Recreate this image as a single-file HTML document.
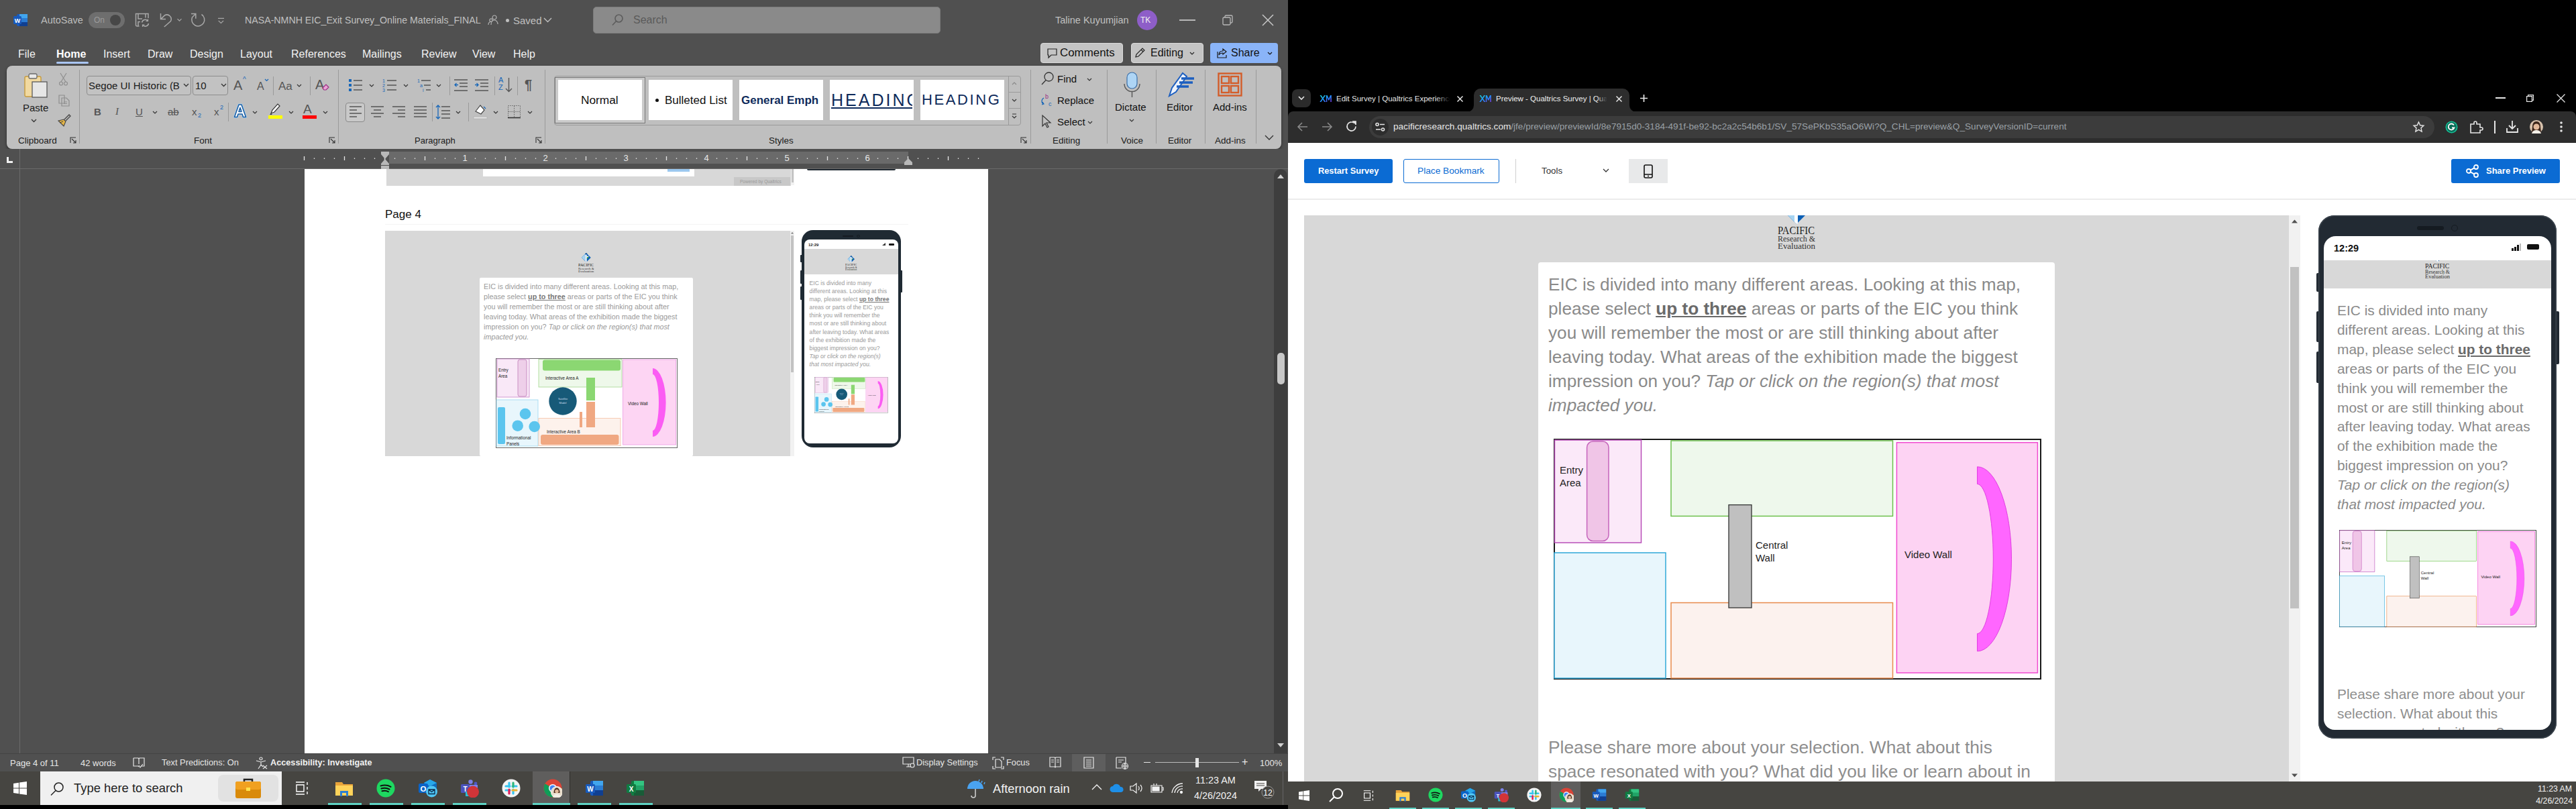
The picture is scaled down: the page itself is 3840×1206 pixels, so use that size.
<!DOCTYPE html>
<html><head><meta charset="utf-8">
<style>
*{box-sizing:border-box;margin:0;padding:0}
html,body{width:3840px;height:1206px;overflow:hidden;background:#000}
body{position:relative;font-family:"Liberation Sans",sans-serif}
.a{position:absolute}
.t{position:absolute;white-space:nowrap;line-height:1}
svg{position:absolute;overflow:visible}
.sep{position:absolute;width:1px;background:#9a9a9a}
.chev{position:absolute;width:6px;height:6px;border-right:1.5px solid #333;border-bottom:1.5px solid #333;transform:rotate(45deg)}
</style></head><body>
<!-- ================= LEFT MONITOR: WORD ================= -->
<div class="a" style="left:0;top:0;width:1920px;height:1200px;background:#505050"></div>
<!-- title bar -->
<svg style="left:20px;top:20px" width="21" height="20" viewBox="0 0 21 20"><rect x="5" y="1" width="16" height="18" rx="2" fill="#185abd"/><rect x="9" y="1" width="12" height="6" fill="#41a5ee"/><rect x="9" y="7" width="12" height="6" fill="#2b7cd3"/><rect x="9" y="13" width="12" height="6" fill="#103f91"/><rect x="0" y="4" width="12" height="12" rx="1.5" fill="#185abd"/><text x="6" y="13.5" font-size="9" font-weight="700" fill="#fff" text-anchor="middle" font-family="Liberation Sans">W</text></svg>
<div class="t" style="left:61px;top:23px;font-size:14.5px;color:#bdbdbd">AutoSave</div>
<div class="a" style="left:132px;top:18px;width:54px;height:24px;border-radius:12px;background:#6e6e6e"></div>
<div class="t" style="left:140px;top:24px;font-size:12px;color:#9c9c9c">On</div>
<div class="a" style="left:164px;top:22px;width:16px;height:16px;border-radius:8px;background:#474747"></div>
<svg style="left:0;top:0" width="350" height="50" fill="none" stroke="#a8a8a8" stroke-width="1.5">
<path d="M208 44.5M221 27V20.5H202.5V37Q202.5 39 204.5 39H207.5"/><path d="M206 20.5V28H212M217 20.5V26.5M206 39V32.5H209"/>
<path d="M211.5 33.5A5 5 0 0 1 220.5 31.5M221.5 35A5 5 0 0 1 212.5 37"/><path d="M220.5 28.5V31.5H217.5M212.5 40V37H215.5" stroke-width="1.2"/>
<path d="M239.5 20V28.6H247M239.5 28.6L246 22.5A6.6 6.6 0 0 1 254.5 31.5L244.8 40"/>
<path d="M264.5 28.2l3 3 3-3" stroke-width="1.2"/>
<path d="M285 20.5H291.8V27.7M291.8 20.5L286.5 25.8A9.5 9.5 0 1 0 300.5 21.5"/>
<path d="M325 27.4H334M325.7 30.8L329.4 34.5 333.1 30.8" stroke-width="1.2"/>
</svg>
<div class="t" style="left:365px;top:23px;font-size:14.2px;color:#c0c0c0">NASA-NMNH EIC_Exit Survey_Online Materials_FINAL</div>
<svg style="left:727px;top:22px" width="15" height="16" viewBox="0 0 15 16" fill="none" stroke="#b0b0b0" stroke-width="1.2"><circle cx="10" cy="4" r="3"/><path d="M5 15c0-4 2-7 5-7s5 3 5 6"/><circle cx="5" cy="8" r="2.2"/><path d="M1 15c0-3 1.5-4.5 4-4.5"/></svg>
<div class="a" style="left:754px;top:28px;width:5px;height:5px;border-radius:3px;background:#c0c0c0"></div>
<div class="t" style="left:765px;top:23px;font-size:15px;color:#c0c0c0">Saved</div>
<svg style="left:810px;top:26px" width="13" height="8" viewBox="0 0 13 8" fill="none" stroke="#c0c0c0" stroke-width="1.4"><path d="M1 1l5.5 5.5L12 1"/></svg>
<div class="a" style="left:884px;top:10px;width:518px;height:40px;border-radius:5px;background:#8a8a8a;border:1px solid #7a7a7a"></div>
<svg style="left:912px;top:21px" width="17" height="18" viewBox="0 0 17 18" fill="none" stroke="#5c5c5c" stroke-width="1.6"><circle cx="10.5" cy="6.5" r="5.5"/><path d="M6.5 10.5L1 16.5"/></svg>
<div class="t" style="left:944px;top:22px;font-size:16px;color:#5a5a5a">Search</div>
<div class="t" style="left:1573px;top:23px;font-size:14.5px;color:#c0c0c0">Taline Kuyumjian</div>
<div class="a" style="left:1695px;top:15px;width:30px;height:30px;border-radius:15px;background:#8e5ec8"></div>
<div class="t" style="left:1700px;top:24px;font-size:12px;color:#f0f0f0">TK</div>
<div class="a" style="left:1758px;top:29px;width:24px;height:1.5px;background:#b8b8b8"></div>
<svg style="left:1822px;top:22px" width="16" height="16" viewBox="0 0 16 16" fill="none" stroke="#b8b8b8" stroke-width="1.3"><rect x="1" y="4" width="11" height="11" rx="1.5"/><path d="M4 4V2.5A1.5 1.5 0 0 1 5.5 1H13.5A1.5 1.5 0 0 1 15 2.5V10.5A1.5 1.5 0 0 1 13.5 12H12"/></svg>
<svg style="left:1881px;top:21px" width="18" height="18" viewBox="0 0 18 18" fill="none" stroke="#c8c8c8" stroke-width="1.5"><path d="M1 1l16 16M17 1L1 17"/></svg>
<!-- tab row -->
<div class="t" style="left:27px;top:73px;font-size:16px;color:#f2f2f2">File</div>
<div class="t" style="left:84px;top:73px;font-size:16px;color:#ffffff;font-weight:700">Home</div>
<div class="a" style="left:84px;top:92px;width:48px;height:3px;border-radius:2px;background:#aac6f5"></div>
<div class="t" style="left:154px;top:73px;font-size:16px;color:#f2f2f2">Insert</div>
<div class="t" style="left:220px;top:73px;font-size:16px;color:#f2f2f2">Draw</div>
<div class="t" style="left:283px;top:73px;font-size:16px;color:#f2f2f2">Design</div>
<div class="t" style="left:358px;top:73px;font-size:16px;color:#f2f2f2">Layout</div>
<div class="t" style="left:434px;top:73px;font-size:16px;color:#f2f2f2">References</div>
<div class="t" style="left:540px;top:73px;font-size:16px;color:#f2f2f2">Mailings</div>
<div class="t" style="left:628px;top:73px;font-size:16px;color:#f2f2f2">Review</div>
<div class="t" style="left:704px;top:73px;font-size:16px;color:#f2f2f2">View</div>
<div class="t" style="left:765px;top:73px;font-size:16px;color:#f2f2f2">Help</div>
<!-- comments / editing / share -->
<div class="a" style="left:1551px;top:64px;width:123px;height:30px;border-radius:4px;background:#c4c4c4;border:1px solid #dadada"></div>
<svg style="left:1561px;top:72px" width="15" height="15" viewBox="0 0 15 15" fill="none" stroke="#222" stroke-width="1.2"><path d="M1 1h13v9H6l-4 4v-4H1z"/></svg>
<div class="t" style="left:1580px;top:71px;font-size:16.9px;color:#111">Comments</div>
<div class="a" style="left:1686px;top:64px;width:108px;height:30px;border-radius:4px;background:#c4c4c4;border:1px solid #dadada"></div>
<svg style="left:1691px;top:70px" width="17" height="17" viewBox="0 0 17 17" fill="none" stroke="#222" stroke-width="1.2"><path d="M2 15l1-4L12 2l3 3-9 9z M10 4l3 3"/></svg>
<div class="t" style="left:1715px;top:71px;font-size:16px;color:#111">Editing</div>
<svg style="left:1773px;top:77px" width="8" height="5" viewBox="0 0 8 5" fill="none" stroke="#222" stroke-width="1.2"><path d="M1 1l3 3 3-3"/></svg>
<div class="a" style="left:1804px;top:64px;width:101px;height:30px;border-radius:4px;background:#8ab4f8"></div>
<svg style="left:1814px;top:71px" width="17" height="16" viewBox="0 0 17 16" fill="none" stroke="#1a1a1a" stroke-width="1.2"><path d="M1 6v9h13v-4M9 2l5 4-5 4V8c-3 0-5 1-6 3 0-4 2-6 6-6z"/></svg>
<div class="t" style="left:1835px;top:71px;font-size:16px;color:#111">Share</div>
<svg style="left:1889px;top:77px" width="8" height="5" viewBox="0 0 8 5" fill="none" stroke="#111" stroke-width="1.2"><path d="M1 1l3 3 3-3"/></svg>
<!-- ribbon -->
<div class="a" style="left:10px;top:98px;width:1900px;height:124px;border-radius:8px;background:#bfbfbf;box-shadow:0 2px 4px rgba(0,0,0,.45)"></div>
<!-- clipboard -->
<svg style="left:36px;top:108px" width="36" height="38" viewBox="0 0 36 38"><rect x="1" y="6" width="24" height="30" rx="2" fill="#f1d9a0" stroke="#c79b3b" stroke-width="1.4"/><rect x="7" y="2" width="12" height="7" rx="2" fill="#e8e8e8" stroke="#6b6b6b" stroke-width="1.3"/><rect x="12" y="14" width="22" height="23" fill="#e6e6e6" stroke="#5a5a5a" stroke-width="1.3"/></svg>
<div class="t" style="left:34px;top:153px;font-size:15px;color:#1a1a1a">Paste</div>
<svg style="left:46px;top:177px" width="9" height="6" viewBox="0 0 9 6" fill="none" stroke="#333" stroke-width="1.3"><path d="M1 1l3.5 3.5L8 1"/></svg>
<svg style="left:88px;top:108px" width="13" height="20" viewBox="0 0 13 20" fill="none" stroke="#8e8e8e" stroke-width="1.2"><path d="M2 1l8 13M11 1L3 14"/><circle cx="3" cy="16.5" r="2.5"/><circle cx="10" cy="16.5" r="2.5"/></svg>
<svg style="left:87px;top:141px" width="17" height="18" viewBox="0 0 17 18" fill="none" stroke="#8e8e8e" stroke-width="1.2"><path d="M1 1h8v12H1z"/><path d="M5 5h7l4 4v8H5z"/><path d="M8 11h5M8 13.5h5"/></svg>
<svg style="left:86px;top:170px" width="20" height="19" viewBox="0 0 20 19"><path d="M1 10l8-2 3 3-3 7z" fill="#e4b547" stroke="#444" stroke-width="1.1"/><path d="M10 8l7-7 2 2-7 7" fill="none" stroke="#444" stroke-width="1.3"/><path d="M3 13l5-2" stroke="#444" stroke-width="1"/></svg>
<div class="t" style="left:27px;top:203px;font-size:13.5px;color:#1a1a1a">Clipboard</div>
<svg style="left:104px;top:204px" width="10" height="10" viewBox="0 0 10 10" fill="none" stroke="#333" stroke-width="1.1"><path d="M1 9V1h8M3 3l6 6M9 5v4H5"/></svg>
<div class="sep" style="left:118px;top:104px;height:110px"></div>
<!-- font -->
<div class="a" style="left:129px;top:113px;width:156px;height:29px;border-radius:4px;border:1px solid #8c8c8c;background:#c2c2c2"></div>
<div class="t" style="left:132px;top:120px;font-size:15px;color:#1a1a1a">Segoe UI Historic (B</div>
<svg style="left:273px;top:124px" width="9" height="6" viewBox="0 0 9 6" fill="none" stroke="#333" stroke-width="1.3"><path d="M1 1l3.5 3.5L8 1"/></svg>
<div class="a" style="left:287px;top:113px;width:53px;height:29px;border-radius:4px;border:1px solid #8c8c8c;background:#c2c2c2"></div>
<div class="t" style="left:291px;top:120px;font-size:15px;color:#1a1a1a">10</div>
<svg style="left:329px;top:124px" width="9" height="6" viewBox="0 0 9 6" fill="none" stroke="#333" stroke-width="1.3"><path d="M1 1l3.5 3.5L8 1"/></svg>
<div class="t" style="left:348px;top:117px;font-size:20px;color:#555">A</div>
<div class="t" style="left:362px;top:114px;font-size:10px;color:#1766b8">^</div>
<div class="t" style="left:383px;top:121px;font-size:16px;color:#555">A</div>
<svg style="left:394px;top:117px" width="7" height="5" viewBox="0 0 7 5" fill="none" stroke="#1766b8" stroke-width="1.2"><path d="M1 1l2.5 2.5L6 1"/></svg>
<div class="sep" style="left:407px;top:114px;height:28px"></div>
<div class="t" style="left:415px;top:120px;font-size:17px;color:#555">Aa</div>
<svg style="left:442px;top:125px" width="8" height="5" viewBox="0 0 8 5" fill="none" stroke="#333" stroke-width="1.2"><path d="M1 1l3 3 3-3"/></svg>
<div class="sep" style="left:462px;top:114px;height:28px"></div>
<div class="t" style="left:470px;top:116px;font-size:20px;color:#555">A</div>
<svg style="left:480px;top:125px" width="11" height="10" viewBox="0 0 11 10"><path d="M1 6l5-5 4 4-4 4H3z" fill="#e9a3d6" stroke="#9b2d83" stroke-width="1.2"/></svg>
<div class="t" style="left:140px;top:159px;font-size:15px;color:#555;font-weight:700">B</div>
<div class="t" style="left:172px;top:159px;font-size:15px;color:#555;font-style:italic;font-family:'Liberation Serif'">I</div>
<div class="t" style="left:202px;top:159px;font-size:15px;color:#555;text-decoration:underline">U</div>
<svg style="left:227px;top:165px" width="8" height="5" viewBox="0 0 8 5" fill="none" stroke="#333" stroke-width="1.2"><path d="M1 1l3 3 3-3"/></svg>
<div class="t" style="left:250px;top:159px;font-size:15px;color:#555;text-decoration:line-through">ab</div>
<div class="t" style="left:286px;top:159px;font-size:15px;color:#555">x</div>
<div class="t" style="left:295px;top:168px;font-size:9px;color:#1766b8">2</div>
<div class="t" style="left:319px;top:159px;font-size:15px;color:#555">x</div>
<div class="t" style="left:328px;top:156px;font-size:9px;color:#1766b8">2</div>
<div class="sep" style="left:340px;top:153px;height:28px"></div>
<svg style="left:348px;top:154px" width="20" height="22" viewBox="0 0 20 22"><path d="M1.5 20.5L8 2h4l6.5 18.5h-4l-1.5-4.5H7l-1.5 4.5zM8 12.5h4L10 6.5z" fill="#eaf3fb" stroke="#a9d1f2" stroke-width="3" stroke-linejoin="round"/><path d="M1.5 20.5L8 2h4l6.5 18.5h-4l-1.5-4.5H7l-1.5 4.5zM8 12.5h4L10 6.5z" fill="#fff" stroke="#1d5fa3" stroke-width="1.6" stroke-linejoin="round"/></svg>
<svg style="left:376px;top:165px" width="8" height="5" viewBox="0 0 8 5" fill="none" stroke="#333" stroke-width="1.2"><path d="M1 1l3 3 3-3"/></svg>
<svg style="left:400px;top:153px" width="21" height="25" viewBox="0 0 21 25"><path d="M4 16l2-5 8-9 3 3-8 9z" fill="#fff" stroke="#333" stroke-width="1.2"/><path d="M4 16l-2 2h4z" fill="#333"/><rect x="0" y="19" width="21" height="5" fill="#ffff00"/></svg>
<svg style="left:430px;top:165px" width="8" height="5" viewBox="0 0 8 5" fill="none" stroke="#333" stroke-width="1.2"><path d="M1 1l3 3 3-3"/></svg>
<div class="t" style="left:452px;top:153px;font-size:19px;color:#555">A</div>
<div class="a" style="left:451px;top:172px;width:21px;height:5px;background:#ff0000"></div>
<svg style="left:481px;top:165px" width="8" height="5" viewBox="0 0 8 5" fill="none" stroke="#333" stroke-width="1.2"><path d="M1 1l3 3 3-3"/></svg>
<div class="t" style="left:289px;top:203px;font-size:13.5px;color:#1a1a1a">Font</div>
<svg style="left:490px;top:204px" width="10" height="10" viewBox="0 0 10 10" fill="none" stroke="#333" stroke-width="1.1"><path d="M1 9V1h8M3 3l6 6M9 5v4H5"/></svg>
<div class="sep" style="left:504px;top:104px;height:110px"></div>
<!-- paragraph -->
<svg style="left:520px;top:117px" width="20" height="20" viewBox="0 0 20 20"><rect x="0" y="1" width="4" height="4" fill="#1766b8"/><rect x="0" y="8" width="4" height="4" fill="#1766b8"/><rect x="0" y="15" width="4" height="4" fill="#1766b8"/><path d="M7 3h13M7 10h13M7 17h13" stroke="#555" stroke-width="1.5"/></svg>
<svg style="left:550px;top:125px" width="8" height="5" viewBox="0 0 8 5" fill="none" stroke="#333" stroke-width="1.2"><path d="M1 1l3 3 3-3"/></svg>
<svg style="left:570px;top:116px" width="21" height="22" viewBox="0 0 21 22"><text x="0" y="7" font-size="7" fill="#1766b8" font-family="Liberation Sans">1</text><text x="0" y="14" font-size="7" fill="#1766b8" font-family="Liberation Sans">2</text><text x="0" y="21" font-size="7" fill="#1766b8" font-family="Liberation Sans">3</text><path d="M7 4h14M7 11h14M7 18h14" stroke="#555" stroke-width="1.5"/></svg>
<svg style="left:601px;top:125px" width="8" height="5" viewBox="0 0 8 5" fill="none" stroke="#333" stroke-width="1.2"><path d="M1 1l3 3 3-3"/></svg>
<svg style="left:622px;top:116px" width="20" height="22" viewBox="0 0 20 22"><text x="0" y="7" font-size="7" fill="#1766b8" font-family="Liberation Sans">1</text><text x="4" y="14" font-size="7" fill="#1766b8" font-family="Liberation Sans">a</text><text x="8" y="21" font-size="7" fill="#1766b8" font-family="Liberation Sans">i</text><path d="M6 4h14M10 11h10M13 18h7" stroke="#555" stroke-width="1.5"/></svg>
<svg style="left:650px;top:125px" width="8" height="5" viewBox="0 0 8 5" fill="none" stroke="#333" stroke-width="1.2"><path d="M1 1l3 3 3-3"/></svg>
<div class="sep" style="left:670px;top:114px;height:28px"></div>
<svg style="left:677px;top:118px" width="20" height="18" viewBox="0 0 20 18"><path d="M0 1h20M8 6h12M8 11h12M0 17h20" stroke="#555" stroke-width="1.5"/><path d="M6 8.5H1M3.5 6L1 8.5 3.5 11" fill="none" stroke="#1766b8" stroke-width="1.3"/></svg>
<svg style="left:708px;top:118px" width="20" height="18" viewBox="0 0 20 18"><path d="M0 1h20M8 6h12M8 11h12M0 17h20" stroke="#555" stroke-width="1.5"/><path d="M0 8.5h5M2.5 6L5 8.5 2.5 11" fill="none" stroke="#1766b8" stroke-width="1.3"/></svg>
<div class="sep" style="left:737px;top:114px;height:28px"></div>
<div class="t" style="left:743px;top:114px;font-size:11px;color:#1766b8;line-height:11px">A<br>Z</div>
<svg style="left:753px;top:116px" width="11" height="22" viewBox="0 0 11 22" fill="none" stroke="#555" stroke-width="1.4"><path d="M5.5 0v20M1 16l4.5 4.5L10 16"/></svg>
<div class="sep" style="left:771px;top:114px;height:28px"></div>
<div class="t" style="left:782px;top:116px;font-size:20px;color:#555;font-weight:700">¶</div>
<div class="a" style="left:515px;top:153px;width:29px;height:29px;border-radius:4px;border:1px solid #8a8a8a;background:#c9c9c9"></div>
<svg style="left:521px;top:158px" width="18" height="18" viewBox="0 0 18 18" stroke="#555" stroke-width="1.5"><path d="M0 1h18M0 6h11M0 11h18M0 16h11"/></svg>
<svg style="left:553px;top:158px" width="19" height="18" viewBox="0 0 19 18" stroke="#555" stroke-width="1.5"><path d="M0 1h19M4 6h11M0 11h19M4 16h11"/></svg>
<svg style="left:585px;top:158px" width="19" height="18" viewBox="0 0 19 18" stroke="#555" stroke-width="1.5"><path d="M0 1h19M8 6h11M0 11h19M8 16h11"/></svg>
<svg style="left:617px;top:158px" width="19" height="18" viewBox="0 0 19 18" stroke="#555" stroke-width="1.5"><path d="M0 1h19M0 6h19M0 11h19M0 16h19"/></svg>
<div class="sep" style="left:644px;top:153px;height:28px"></div>
<svg style="left:650px;top:156px" width="21" height="22" viewBox="0 0 21 22"><path d="M8 3h13M8 9h13M8 14h13M8 20h13" stroke="#555" stroke-width="1.5"/><path d="M3 1v20M0 4l3-3 3 3M0 18l3 3 3-3" fill="none" stroke="#1766b8" stroke-width="1.3"/></svg>
<svg style="left:679px;top:165px" width="8" height="5" viewBox="0 0 8 5" fill="none" stroke="#333" stroke-width="1.2"><path d="M1 1l3 3 3-3"/></svg>
<div class="sep" style="left:698px;top:153px;height:28px"></div>
<svg style="left:706px;top:155px" width="20" height="23" viewBox="0 0 20 23"><path d="M3 11l7-9 6 7-5 6z" fill="#fff" stroke="#444" stroke-width="1.2"/><path d="M15 4l3 3" stroke="#1766b8" stroke-width="1.3"/><rect x="0" y="19" width="20" height="3" fill="#e0e0e0" stroke="#aaa" stroke-width=".6"/></svg>
<svg style="left:735px;top:165px" width="8" height="5" viewBox="0 0 8 5" fill="none" stroke="#333" stroke-width="1.2"><path d="M1 1l3 3 3-3"/></svg>
<svg style="left:757px;top:157px" width="19" height="19" viewBox="0 0 19 19" fill="none" stroke="#666" stroke-width="1" stroke-dasharray="1.5 1.5"><rect x=".5" y=".5" width="18" height="18"/><path d="M9.5 1v17M1 9.5h17"/><path d="M0 18.5h19" stroke="#333" stroke-width="1.6" stroke-dasharray="none"/></svg>
<svg style="left:786px;top:165px" width="8" height="5" viewBox="0 0 8 5" fill="none" stroke="#333" stroke-width="1.2"><path d="M1 1l3 3 3-3"/></svg>
<div class="t" style="left:618px;top:203px;font-size:13px;color:#1a1a1a">Paragraph</div>
<svg style="left:798px;top:204px" width="10" height="10" viewBox="0 0 10 10" fill="none" stroke="#333" stroke-width="1.1"><path d="M1 9V1h8M3 3l6 6M9 5v4H5"/></svg>
<div class="sep" style="left:812px;top:104px;height:110px"></div>
<!-- styles gallery -->
<div class="a" style="left:826px;top:113px;width:696px;height:74px;border-radius:4px;border:1px solid #9a9a9a;background:#bfbfbf"></div>
<div class="a" style="left:827px;top:114.5px;width:135px;height:69px;border:1px solid #777;background:#cacaca"></div>
<div class="a" style="left:832px;top:119px;width:125px;height:60px;background:#fff"></div>
<div class="t" style="left:866px;top:141px;font-size:17.3px;color:#111">Normal</div>
<div class="a" style="left:967px;top:119px;width:125px;height:60px;background:#fff"></div>
<div class="a" style="left:977px;top:147px;width:5px;height:5px;border-radius:3px;background:#111"></div>
<div class="t" style="left:991px;top:141px;font-size:17px;color:#111">Bulleted List</div>
<div class="a" style="left:1102px;top:119px;width:125px;height:60px;background:#fff"></div>
<div class="t" style="left:1105px;top:141px;font-size:17px;color:#0e2a5a;font-weight:700">General Emph</div>
<div class="a" style="left:1237px;top:119px;width:125px;height:60px;background:#fff"></div>
<div class="a" style="left:1239px;top:119px;width:121px;height:60px;overflow:hidden"><div class="t" style="left:0;top:18px;font-size:25px;color:#0e2a5a;letter-spacing:3px;text-decoration:underline">HEADING</div></div>
<div class="a" style="left:1372px;top:119px;width:125px;height:60px;background:#fff"></div>
<div class="t" style="left:1374px;top:138px;font-size:22px;color:#0e2a5a;letter-spacing:2.6px">HEADING</div>
<div class="a" style="left:1503px;top:114px;width:18px;height:72px;border-left:1px solid #9a9a9a"></div>
<div class="a" style="left:1503px;top:137px;width:18px;height:1px;background:#9a9a9a"></div>
<div class="a" style="left:1503px;top:161px;width:18px;height:1px;background:#9a9a9a"></div>
<svg style="left:1508px;top:122px" width="8" height="5" viewBox="0 0 8 5" fill="none" stroke="#888" stroke-width="1.1"><path d="M1 4l3-3 3 3"/></svg>
<svg style="left:1508px;top:147px" width="8" height="5" viewBox="0 0 8 5" fill="none" stroke="#333" stroke-width="1.2"><path d="M1 1l3 3 3-3"/></svg>
<svg style="left:1508px;top:169px" width="8" height="8" viewBox="0 0 8 8" fill="none" stroke="#333" stroke-width="1.2"><path d="M1 1h6M1 4l3 3 3-3"/></svg>
<div class="t" style="left:1146px;top:203px;font-size:13.5px;color:#1a1a1a">Styles</div>
<svg style="left:1521px;top:204px" width="10" height="10" viewBox="0 0 10 10" fill="none" stroke="#333" stroke-width="1.1"><path d="M1 9V1h8M3 3l6 6M9 5v4H5"/></svg>
<div class="sep" style="left:1536px;top:104px;height:110px"></div>
<!-- editing -->
<svg style="left:1552px;top:107px" width="19" height="20" viewBox="0 0 19 20" fill="none" stroke="#333" stroke-width="1.3"><circle cx="11.5" cy="7.5" r="6.5"/><path d="M7 12.5L1 19"/></svg>
<div class="t" style="left:1576px;top:110px;font-size:15px;color:#111">Find</div>
<svg style="left:1620px;top:116px" width="8" height="5" viewBox="0 0 8 5" fill="none" stroke="#333" stroke-width="1.2"><path d="M1 1l3 3 3-3"/></svg>
<svg style="left:1551px;top:139px" width="19" height="20" viewBox="0 0 19 20"><text x="7" y="8" font-size="9" fill="#9b2d83" font-family="Liberation Sans">b</text><text x="12" y="19" font-size="9" fill="#1766b8" font-family="Liberation Sans">c</text><path d="M5 7C1 9 1 15 5 16M3 13l2 3-3 1" fill="none" stroke="#1766b8" stroke-width="1.2"/></svg>
<div class="t" style="left:1576px;top:142px;font-size:15px;color:#111">Replace</div>
<svg style="left:1553px;top:171px" width="14" height="20" viewBox="0 0 14 20" fill="none" stroke="#333" stroke-width="1.2"><path d="M1 1v16l4-4 3 6 2-1-3-6h6z"/></svg>
<div class="t" style="left:1576px;top:174px;font-size:15px;color:#111">Select</div>
<svg style="left:1621px;top:180px" width="8" height="5" viewBox="0 0 8 5" fill="none" stroke="#333" stroke-width="1.2"><path d="M1 1l3 3 3-3"/></svg>
<div class="t" style="left:1569px;top:203px;font-size:13.5px;color:#1a1a1a">Editing</div>
<div class="sep" style="left:1650px;top:104px;height:110px"></div>
<svg style="left:1675px;top:107px" width="25" height="38" viewBox="0 0 25 38"><rect x="5" y="1" width="15" height="24" rx="7.5" fill="#aed5f5" stroke="#3a6fa8" stroke-width="1.2"/><path d="M1 18a11.5 11.5 0 0 0 23 0M12.5 30v8" fill="none" stroke="#555" stroke-width="1.4"/></svg>
<div class="t" style="left:1662px;top:152px;font-size:15px;color:#111">Dictate</div>
<svg style="left:1683px;top:177px" width="8" height="5" viewBox="0 0 8 5" fill="none" stroke="#333" stroke-width="1.2"><path d="M1 1l3 3 3-3"/></svg>
<div class="t" style="left:1671px;top:203px;font-size:13.5px;color:#1a1a1a">Voice</div>
<div class="sep" style="left:1723px;top:104px;height:110px"></div>
<svg style="left:1741px;top:107px" width="39" height="38" viewBox="0 0 39 38"><path d="M2 36l4-12L22 2l6 5L12 30z" fill="#eef3fb" stroke="#1d5fc0" stroke-width="2"/><path d="M20 10h19M17 16h20M13 22h18" stroke="#1d5fc0" stroke-width="3.5"/></svg>
<div class="t" style="left:1739px;top:152px;font-size:15px;color:#111">Editor</div>
<div class="t" style="left:1741px;top:203px;font-size:13.5px;color:#1a1a1a">Editor</div>
<div class="sep" style="left:1796px;top:104px;height:110px"></div>
<svg style="left:1815px;top:108px" width="37" height="36" viewBox="0 0 37 36" fill="none" stroke="#d35d2a" stroke-width="2.4"><rect x="1.5" y="1.5" width="34" height="33"/><rect x="6" y="6" width="11" height="10"/><rect x="20" y="6" width="11" height="10"/><rect x="6" y="20" width="11" height="10"/><rect x="20" y="20" width="11" height="10"/></svg>
<div class="t" style="left:1808px;top:152px;font-size:15px;color:#111">Add-ins</div>
<div class="t" style="left:1811px;top:203px;font-size:13.5px;color:#1a1a1a">Add-ins</div>
<div class="sep" style="left:1872px;top:104px;height:110px"></div>
<svg style="left:1885px;top:201px" width="14" height="8" viewBox="0 0 14 8" fill="none" stroke="#333" stroke-width="1.4"><path d="M1 1l6 6 6-6"/></svg>
<!-- ruler -->
<div class="a" style="left:0;top:222px;width:1920px;height:30px;background:#505050"></div>
<div class="a" style="left:580px;top:226px;width:774px;height:18px;background:#6a6a6a"></div>
<div class="a" style="left:0;top:251px;width:1920px;height:1px;background:#6a6a6a"></div>
<div class="a" style="left:29px;top:222px;width:1px;height:901px;background:#6a6a6a"></div>
<svg style="left:10px;top:234px" width="9" height="9" viewBox="0 0 9 9"><path d="M0 0h3v6h6v3H0z" fill="#f0f0f0"/></svg>
<svg style="left:0;top:0" width="1920" height="260" fill="none" stroke="#e8e8e8" stroke-width="1.3"><path d="M453.5 233v6M468.5 235.5v1.5M483.5 235.5v1.5M498.5 235.5v1.5M513.5 233v6M528.5 235.5v1.5M543.5 235.5v1.5M558.5 235.5v1.5M573.5 233v6M588.5 235.5v1.5M603.5 235.5v1.5M618.5 235.5v1.5M633.5 233v6M648.5 235.5v1.5M663.5 235.5v1.5M678.5 235.5v1.5M708.5 235.5v1.5M723.5 235.5v1.5M738.5 235.5v1.5M753.5 233v6M768.5 235.5v1.5M783.5 235.5v1.5M798.5 235.5v1.5M828.5 235.5v1.5M843.5 235.5v1.5M858.5 235.5v1.5M873.5 233v6M888.5 235.5v1.5M903.5 235.5v1.5M918.5 235.5v1.5M948.5 235.5v1.5M963.5 235.5v1.5M978.5 235.5v1.5M993.5 233v6M1008.5 235.5v1.5M1023.5 235.5v1.5M1038.5 235.5v1.5M1068.5 235.5v1.5M1083.5 235.5v1.5M1098.5 235.5v1.5M1113.5 233v6M1128.5 235.5v1.5M1143.5 235.5v1.5M1158.5 235.5v1.5M1188.5 235.5v1.5M1203.5 235.5v1.5M1218.5 235.5v1.5M1233.5 233v6M1248.5 235.5v1.5M1263.5 235.5v1.5M1278.5 235.5v1.5M1308.5 235.5v1.5M1323.5 235.5v1.5M1338.5 235.5v1.5M1353.5 233v6M1368.5 235.5v1.5M1383.5 235.5v1.5M1398.5 235.5v1.5M1413.5 233v6M1428.5 235.5v1.5M1443.5 235.5v1.5M1458.5 235.5v1.5"/></svg>
<div class="t" style="left:689.5px;top:229px;font-size:13px;color:#e8e8e8">1</div>
<div class="t" style="left:809.5px;top:229px;font-size:13px;color:#e8e8e8">2</div>
<div class="t" style="left:929.5px;top:229px;font-size:13px;color:#e8e8e8">3</div>
<div class="t" style="left:1049.5px;top:229px;font-size:13px;color:#e8e8e8">4</div>
<div class="t" style="left:1169.5px;top:229px;font-size:13px;color:#e8e8e8">5</div>
<div class="t" style="left:1289.5px;top:229px;font-size:13px;color:#e8e8e8">6</div>
<svg style="left:567px;top:226px" width="14" height="26" viewBox="0 0 14 26"><path d="M1 0h12v4l-6 7-6-7z" fill="#b8b8b8"/><path d="M7 11l6 7v2H1v-2z" fill="#b8b8b8"/><rect x="1" y="21" width="12" height="5" fill="#b8b8b8"/></svg>
<svg style="left:1347px;top:236px" width="14" height="10" viewBox="0 0 14 10"><path d="M7 0l6 6v4H1V6z" fill="#b8b8b8"/></svg>
<!-- defs -->
<svg width="0" height="0" style="left:0;top:0;position:absolute">
<defs>
<symbol id="mapW" viewBox="0 0 271 134">
<rect x=".5" y=".5" width="270" height="133" fill="#fff" stroke="#666" stroke-width="1"/>
<rect x="2" y="1" width="48" height="57" fill="#f9e8f7" stroke="#c882c8" stroke-width=".8"/>
<rect x="33" y="2" width="13" height="55" rx="3" fill="#eecfe9" stroke="#bf7fb8" stroke-width=".8"/>
<text x="4" y="20" font-size="6.3" fill="#222" font-family="Liberation Sans">Entry</text>
<text x="4" y="29" font-size="6.3" fill="#222" font-family="Liberation Sans">Area</text>
<rect x="64" y="1.5" width="124" height="41.5" fill="#eef8ea" stroke="#a3d88f" stroke-width=".8"/>
<rect x="70" y="2.5" width="116" height="16" rx="3" fill="#8bd772"/>
<text x="74" y="31.5" font-size="6.3" fill="#222" font-family="Liberation Sans">Interactive Area A</text>
<rect x="1" y="62" width="62" height="69" fill="#e8f6fc" stroke="#9ad6ef" stroke-width=".8"/>
<rect x="64" y="89.6" width="122" height="41" fill="#fdf2ec" stroke="#f6c0a4" stroke-width=".8"/>
<rect x="135" y="29" width="13" height="34" fill="#8bd772"/>
<rect x="135" y="65" width="13" height="38" fill="#f0a882"/>
<rect x="125" y="80" width="4" height="23" fill="#f0a882"/>
<circle cx="100" cy="64" r="20.7" fill="#175a78"/>
<text x="100" y="62" font-size="4" fill="#cde" text-anchor="middle" font-family="Liberation Sans">Satellite</text>
<text x="100" y="68" font-size="4" fill="#cde" text-anchor="middle" font-family="Liberation Sans">Model</text>
<rect x="3" y="73" width="11" height="55" rx="2" fill="#5bc5ee"/>
<circle cx="44" cy="83" r="8.3" fill="#5bc5ee"/><circle cx="32.7" cy="100.7" r="8.3" fill="#5bc5ee"/><circle cx="57.7" cy="102" r="8.3" fill="#5bc5ee"/>
<rect x="67" y="114" width="116.5" height="15" rx="3" fill="#f0a882"/>
<text x="16" y="121" font-size="6.3" fill="#222" font-family="Liberation Sans">Informational</text>
<text x="16" y="130" font-size="6.3" fill="#222" font-family="Liberation Sans">Panels</text>
<text x="76" y="111.5" font-size="6.3" fill="#222" font-family="Liberation Sans">Interactive Area B</text>
<rect x="189.6" y="2" width="79" height="127" fill="#fdd5f3" stroke="#ec9be3" stroke-width=".8"/>
<path d="M234 15A19.6 51 0 0 1 234 117V108A9 42 0 0 0 234 24Z" fill="#fb5cf3"/>
<text x="197" y="70" font-size="6.3" fill="#222" font-family="Liberation Sans">Video Wall</text>
</symbol>
<symbol id="mapQ" viewBox="0 0 727 359">
<rect x="1" y="1" width="725" height="357" fill="#fff" stroke="#1a1a1a" stroke-width="2"/>
<rect x="1.5" y="2" width="129" height="153" fill="#fbe9f9" stroke="#b84fb8" stroke-width="1.5"/>
<rect x="49.6" y="4" width="32.4" height="148.5" rx="9" fill="#f0c5e7" stroke="#c564bc" stroke-width="1.5"/>
<text x="9" y="51.5" font-size="15" fill="#222" font-family="Liberation Sans">Entry</text>
<text x="9" y="71" font-size="15" fill="#222" font-family="Liberation Sans">Area</text>
<rect x="175" y="3" width="330.5" height="112.4" fill="#eef8ec" stroke="#6cc04c" stroke-width="1.5"/>
<rect x="1" y="170" width="166" height="187" fill="#e8f6fc" stroke="#2fa8d8" stroke-width="1.5"/>
<rect x="175" y="244.5" width="330.5" height="112.5" fill="#fcf2ee" stroke="#e88a4c" stroke-width="1.5"/>
<rect x="261" y="98.6" width="34" height="153.4" fill="#c0c0c0" stroke="#333" stroke-width="1.3"/>
<text x="301" y="163.5" font-size="15" fill="#222" font-family="Liberation Sans">Central</text>
<text x="301" y="182.5" font-size="15" fill="#222" font-family="Liberation Sans">Wall</text>
<rect x="511.4" y="5.7" width="210" height="343.3" fill="#fdd3f3" stroke="#f04ad0" stroke-width="1.5"/>
<path d="M631.5 41.8A51 137.5 0 0 1 631.5 316.8V290.6A23.8 111.55 0 0 0 631.5 67.5Z" fill="#ff66ff" stroke="#e040e0" stroke-width="1"/>
<text x="523" y="177.5" font-size="15" fill="#222" font-family="Liberation Sans">Video Wall</text>
</symbol>
<symbol id="logo" viewBox="0 0 56 72">
<path d="M28 0L44.5 16.5 28 33 11.5 16.5z" fill="#0b5fb5"/><path d="M11.5 16.5L25 3v27z" fill="#a6d4f2"/><path d="M25 6h5v26l-2 1-3-3z" fill="#fff"/><path d="M30 11h8l-8 8z" fill="#fff"/><circle cx="33" cy="17" r="2.6" fill="#5cb531"/><path d="M28 0l5 5h-10z" fill="#0b4f98"/>
<text x="0" y="47.7" font-size="16" fill="#222" font-family="Liberation Serif" textLength="55" lengthAdjust="spacingAndGlyphs">PACIFIC</text>
<text x="0" y="59" font-size="11.5" fill="#333" font-family="Liberation Serif" textLength="56" lengthAdjust="spacingAndGlyphs">Research &amp;</text>
<text x="0" y="70" font-size="11.5" fill="#333" font-family="Liberation Serif" textLength="56" lengthAdjust="spacingAndGlyphs">Evaluation</text>
</symbol>
</defs></svg>
<!-- document page -->
<div class="a" style="left:454px;top:252px;width:1019px;height:871px;background:#fff"></div>
<!-- top (previous) screenshot tail -->
<div class="a" style="left:576px;top:252px;width:603px;height:25px;background:#d8d8d8"></div>
<div class="a" style="left:720px;top:252px;width:315px;height:11px;background:#fff"></div>
<div class="a" style="left:995px;top:252px;width:33px;height:4px;background:#9cc8ef"></div>
<div class="a" style="left:1094px;top:263.5px;width:84px;height:13.5px;background:#c8c8c8"></div>
<div class="t" style="left:1103px;top:268px;font-size:6.5px;color:#999">Powered by Qualtrics</div>
<div class="a" style="left:1179px;top:252px;width:5px;height:24px;background:#f2f2f2"></div>
<div class="a" style="left:1180px;top:252px;width:3px;height:20px;background:#c4c4c4"></div>
<div class="a" style="left:1203px;top:252px;width:132px;height:1.5px;border-radius:0 0 4px 4px;background:#222a33"></div>
<!-- Page 4 -->
<div class="t" style="left:574px;top:311px;font-size:17px;color:#111">Page 4</div>
<div class="a" style="left:574px;top:334px;width:780px;height:1px;background:#f4f4f4"></div>
<!-- image 2: desktop preview -->
<div class="a" style="left:574px;top:344px;width:604px;height:336px;background:#d8d8d8"></div>
<div class="a" style="left:1178px;top:344px;width:6px;height:336px;background:#f2f2f2"></div>
<div class="a" style="left:1179px;top:351px;width:4px;height:204px;background:#c2c2c2"></div>
<svg style="left:1178px;top:345px" width="6" height="4" viewBox="0 0 6 4"><path d="M1 3.5l2-2.5 2 2.5z" fill="#777"/></svg>
<svg style="left:862px;top:376.6px" width="23.6" height="30.3" viewBox="0 0 56 72"><use href="#logo" width="56" height="72"/></svg>
<div class="a" style="left:715px;top:414px;width:318px;height:266px;background:#fff;border-radius:2px"></div>
<div class="a" style="left:721px;top:420px;font-size:10.8px;line-height:14.9px;color:#9a9a9a;white-space:nowrap">EIC is divided into many different areas. Looking at this map,<br>please select <b style="color:#777;text-decoration:underline">up to three</b> areas or parts of the EIC you think<br>you will remember the most or are still thinking about after<br>leaving today. What areas of the exhibition made the biggest<br>impression on you? <i>Tap or click on the region(s) that most</i><br><i>impacted you.</i></div>
<svg style="left:739px;top:534px" width="271" height="134"><use href="#mapW" width="271" height="134"/></svg>
<!-- image 3: phone preview -->
<div class="a" style="left:1195px;top:343px;width:148px;height:324px;border-radius:17px;background:#1f2a33"></div>
<div class="a" style="left:1193px;top:380px;width:3px;height:11px;border-radius:1px;background:#1f2a33"></div>
<div class="a" style="left:1193px;top:403px;width:3px;height:20px;border-radius:1px;background:#1f2a33"></div>
<div class="a" style="left:1193px;top:427px;width:3px;height:20px;border-radius:1px;background:#1f2a33"></div>
<div class="a" style="left:1342px;top:403px;width:3px;height:33px;border-radius:1px;background:#1f2a33"></div>
<div class="a" style="left:1199px;top:357px;width:140px;height:304px;border-radius:8px;background:#fff;overflow:hidden">
  <div class="t" style="left:6px;top:5px;font-size:6px;color:#222;font-weight:700">12:29</div>
  <div class="a" style="left:126px;top:6px;width:8px;height:3px;border-radius:1px;background:#111"></div>
  <div class="a" style="left:116px;top:5px;width:5px;height:4px;background:#333;clip-path:polygon(100% 0,100% 100%,0 100%)"></div>
  <div class="a" style="left:0;top:14px;width:140px;height:38px;background:#d8d8d8"></div>
  <svg style="left:61px;top:23.7px" width="17.6" height="22.6" viewBox="0 0 56 72"><use href="#logo" width="56" height="72"/></svg>
  <div class="a" style="left:7.6px;top:59px;font-size:8.64px;line-height:12.1px;color:#9a9a9a;white-space:nowrap">EIC is divided into many<br>different areas. Looking at this<br>map, please select <b style="color:#777;text-decoration:underline">up to three</b><br>areas or parts of the EIC you<br>think you will remember the<br>most or are still thinking about<br>after leaving today. What areas<br>of the exhibition made the<br>biggest impression on you?<br><i>Tap or click on the region(s)</i><br><i>that most impacted you.</i></div>
  <svg style="left:15px;top:205px" width="110" height="54"><use href="#mapW" width="110" height="54"/></svg>
</div>
<div class="a" style="left:1256px;top:350.5px;width:16px;height:2.5px;border-radius:2px;background:#151b21"></div>
<div class="a" style="left:1277px;top:349.5px;width:4.5px;height:4.5px;border-radius:3px;border:1px solid #151b21"></div>
<!-- doc scrollbar -->
<div class="a" style="left:1899px;top:252px;width:20px;height:871px;background:#3e3e3e;border-radius:10px 10px 0 0"></div>
<svg style="left:1903px;top:259px" width="12" height="8" viewBox="0 0 12 8"><path d="M1 7L6 1l5 6z" fill="#d0d0d0"/></svg>
<div class="a" style="left:1904px;top:526px;width:11px;height:47px;border-radius:5px;background:#c8c8c8"></div>
<svg style="left:1903px;top:1107px" width="12" height="8" viewBox="0 0 12 8"><path d="M1 1h10L6 7z" fill="#d0d0d0"/></svg>
<svg width="0" height="0" style="left:0;top:0;position:absolute"><defs>
<symbol id="iExp" viewBox="0 0 28 28"><path d="M1 5h10l2 3h14v17H1z" fill="#e8a33a"/><path d="M1 10h26v15H1z" fill="#ffd35a"/><path d="M8 18h12v8h-3v-5h-6v5H8z" fill="#2d7fd3"/></symbol>
<symbol id="iSpot" viewBox="0 0 28 28"><circle cx="14" cy="14" r="13.5" fill="#1ed760"/><path d="M6.5 10.5c5-1.6 10.5-1.2 15 1.3M7.5 14.5c4-1.2 8.5-.9 12 1.1M8.5 18.3c3.3-.9 6.6-.6 9.3.9" fill="none" stroke="#111" stroke-width="2.1" stroke-linecap="round"/></symbol>
<symbol id="iOut" viewBox="0 0 28 28"><path d="M8 6l9-5 10 5v14H8z" fill="#0f6cbd"/><path d="M17 1l10 5-10 5-9-5z" fill="#28a8ea"/><rect x="0" y="7" width="14" height="14" rx="2" fill="#0a64c8"/><text x="7" y="18.5" font-size="11.5" font-weight="700" fill="#fff" text-anchor="middle" font-family="Liberation Sans">O</text><circle cx="19.5" cy="19" r="8.5" fill="#50c7f5"/><path d="M15 16h9v6.5h-9zM15 16l4.5 3.5L24 16" fill="none" stroke="#0a2a4a" stroke-width="1.3"/></symbol>
<symbol id="iTeams" viewBox="0 0 28 28"><circle cx="15.5" cy="4.5" r="3.2" fill="#7b83eb"/><circle cx="23" cy="7" r="2.4" fill="#5059c9"/><path d="M11 9h15v11H11z" fill="#7b83eb"/><rect x="1" y="8" width="13" height="13" rx="1.5" fill="#4b53bc"/><text x="7.5" y="18.5" font-size="10" font-weight="700" fill="#fff" text-anchor="middle" font-family="Liberation Sans">T</text><rect x="8" y="19" width="7" height="7" fill="#27c2d8"/><circle cx="19" cy="19.5" r="9" fill="#d13438"/></symbol>
<symbol id="iSlack" viewBox="0 0 28 28"><circle cx="14" cy="14" r="13.5" fill="#f4f4f4"/><path d="M11 6v6M17 16v6M6 17h6M16 11h6" stroke-width="3.2" stroke-linecap="round" fill="none" stroke="#36c5f0"/><path d="M17 6v6" stroke="#2eb67d" stroke-width="3.2" stroke-linecap="round"/><path d="M6 11h6" stroke="#36c5f0" stroke-width="3.2" stroke-linecap="round"/><path d="M16 17h6" stroke="#ecb22e" stroke-width="3.2" stroke-linecap="round"/><path d="M11 16v6" stroke="#e01e5a" stroke-width="3.2" stroke-linecap="round"/></symbol>
<symbol id="iChrome" viewBox="0 0 28 28"><circle cx="14" cy="14" r="13.5" fill="#db4437"/><path d="M14 14L2.3 7.3A13.5 13.5 0 0 0 14 27.5z" fill="#0f9d58"/><path d="M14 14h13.5A13.5 13.5 0 0 1 14 27.5z" fill="#ffcd40"/><circle cx="14" cy="14" r="6" fill="#fff"/><circle cx="14" cy="14" r="4.6" fill="#4285f4"/><circle cx="20" cy="20" r="8.5" fill="#e8dccb" stroke="#f4f0ea" stroke-width="1"/><path d="M15.5 21c0-5 2-7.5 4.5-7.5s4.5 2.5 4.5 7.5" fill="#4a2a1a"/><circle cx="20" cy="18.5" r="2.8" fill="#e2b99a"/><path d="M14 27c1-3.5 3.5-4.5 6-4.5s5 1 6 4.5z" fill="#f3efe8"/></symbol>
<symbol id="iWord" viewBox="0 0 28 28"><rect x="8" y="3" width="19" height="22" rx="2" fill="#185abd"/><rect x="12" y="3" width="15" height="7" fill="#41a5ee"/><rect x="12" y="10" width="15" height="7" fill="#2b7cd3"/><rect x="12" y="17" width="15" height="8" fill="#103f91"/><rect x="1" y="8" width="14" height="13" rx="1.5" fill="#185abd"/><text x="8" y="18.5" font-size="10" font-weight="700" fill="#fff" text-anchor="middle" font-family="Liberation Sans">W</text></symbol>
<symbol id="iExcel" viewBox="0 0 28 28"><rect x="8" y="3" width="19" height="22" rx="2" fill="#107c41"/><rect x="12" y="3" width="15" height="7" fill="#33c481"/><rect x="12" y="10" width="15" height="7" fill="#21a366"/><rect x="12" y="17" width="15" height="8" fill="#185c37"/><rect x="1" y="8" width="14" height="13" rx="1.5" fill="#107c41"/><text x="8" y="18.5" font-size="10" font-weight="700" fill="#fff" text-anchor="middle" font-family="Liberation Sans">X</text></symbol>
<symbol id="iWin" viewBox="0 0 20 20"><path d="M0 3l8-1.2V9.5H0zM9 1.6L20 0v9.5H9zM0 10.5h8v7.7L0 17zM9 10.5h11V20L9 18.4z" fill="#fff"/></symbol>
<symbol id="iTask" viewBox="0 0 20 20"><path d="M1 1h13M1 19h13M2 5h11v10H2zM18 1v4M18 8v4M18 15v4" fill="none" stroke="#fff" stroke-width="1.4"/></symbol>
</defs></svg>
<!-- status bar -->
<div class="a" style="left:0;top:1123px;width:1920px;height:1px;background:#444"></div>
<div class="a" style="left:0;top:1124px;width:1920px;height:26px;background:#505050"></div>
<div class="t" style="left:15px;top:1131px;font-size:13px;color:#e6e6e6">Page 4 of 11</div>
<div class="t" style="left:120px;top:1131px;font-size:13px;color:#e6e6e6">42 words</div>
<svg style="left:198px;top:1129px" width="18" height="17" viewBox="0 0 18 17" fill="none" stroke="#e6e6e6" stroke-width="1.2"><path d="M1 1h7l1 1 1-1h7v12h-5M1 1v12h7l1 1"/><path d="M9 2v8M9 12l2 3 4-5"/></svg>
<div class="t" style="left:241px;top:1131px;font-size:12.85px;color:#e6e6e6">Text Predictions: On</div>
<svg style="left:380px;top:1128px" width="19" height="19" viewBox="0 0 19 19" fill="none" stroke="#e6e6e6" stroke-width="1.2"><circle cx="9" cy="3" r="2"/><path d="M2 6l7 2 7-2M9 8v4l-4 6M9 12l3 3M12 13l6 5M18 13l-6 5"/></svg>
<div class="t" style="left:403px;top:1131px;font-size:12.7px;color:#f2f2f2;font-weight:700">Accessibility: Investigate</div>
<svg style="left:1345px;top:1128px" width="20" height="18" viewBox="0 0 20 18" fill="none" stroke="#e6e6e6" stroke-width="1.2"><path d="M1 1h16v10H1zM6 15h6M9 11v4"/><circle cx="15" cy="13" r="3" fill="#505050"/></svg>
<div class="t" style="left:1366px;top:1131px;font-size:12.8px;color:#e6e6e6">Display Settings</div>
<svg style="left:1479px;top:1128px" width="18" height="19" viewBox="0 0 18 19" fill="none" stroke="#e6e6e6" stroke-width="1.2"><path d="M1 5V1h4M13 1h4v4M17 14v4h-4M5 18H1v-4M5 4h6l3 3v9H5z"/></svg>
<div class="t" style="left:1500px;top:1131px;font-size:12.8px;color:#e6e6e6">Focus</div>
<svg style="left:1564px;top:1128px" width="18" height="17" viewBox="0 0 18 17" fill="none" stroke="#e6e6e6" stroke-width="1.2"><path d="M1 1h7l1 1 1-1h7v14h-7l-1 1-1-1H1zM9 2v13M3 5h4M3 8h4M11 5h4M11 8h4"/></svg>
<div class="a" style="left:1598px;top:1124px;width:50px;height:26px;background:#5e5e5e"></div>
<svg style="left:1615px;top:1128px" width="16" height="18" viewBox="0 0 16 18" fill="none" stroke="#e6e6e6" stroke-width="1.2"><path d="M1 1h14v16H1zM4 5h8M4 8h8M4 11h8M4 14h8"/></svg>
<svg style="left:1663px;top:1128px" width="19" height="19" viewBox="0 0 19 19" fill="none" stroke="#e6e6e6" stroke-width="1.2"><path d="M1 1h14v8M1 1v16h8M4 5h8M4 8h5"/><circle cx="14" cy="14" r="4.5"/><path d="M9.5 14h9M14 9.5c-2 3-2 6 0 9M14 9.5c2 3 2 6 0 9"/></svg>
<div class="a" style="left:1705px;top:1136px;width:10px;height:1.3px;background:#e6e6e6"></div>
<div class="a" style="left:1722px;top:1136px;width:125px;height:1px;background:#bdbdbd"></div>
<div class="a" style="left:1782px;top:1130px;width:5px;height:14px;background:#e6e6e6"></div>
<div class="t" style="left:1851px;top:1128px;font-size:16px;color:#e6e6e6">+</div>
<div class="t" style="left:1878px;top:1131px;font-size:13px;color:#e6e6e6">100%</div>
<!-- left taskbar -->
<div class="a" style="left:0;top:1150px;width:1920px;height:50px;background:#464541"></div>
<div class="a" style="left:0;top:1200px;width:1920px;height:6px;background:#000"></div>
<svg style="left:20px;top:1165px" width="20" height="20"><use href="#iWin" width="20" height="20"/></svg>
<div class="a" style="left:60px;top:1150px;width:360px;height:50px;background:#f0f0f0"></div>
<svg style="left:75px;top:1165px" width="21" height="21" viewBox="0 0 21 21" fill="none" stroke="#222" stroke-width="1.5"><circle cx="12.5" cy="8.5" r="6.5"/><path d="M8 13.5L1 20.5"/></svg>
<div class="t" style="left:110px;top:1166px;font-size:18.4px;color:#222">Type here to search</div>
<div class="a" style="left:325px;top:1155px;width:90px;height:40px;border-radius:8px;background:#e2e2e2"></div>
<svg style="left:351px;top:1160px" width="38" height="30" viewBox="0 0 38 30"><path d="M13 6V2h12v4" fill="none" stroke="#222" stroke-width="2.5"/><rect x="0" y="5" width="38" height="25" rx="3" fill="#d98a0a"/><rect x="0" y="5" width="38" height="12" rx="3" fill="#f0a020"/><rect x="16" y="14" width="6" height="5" fill="#ffe14a"/></svg>
<svg style="left:440px;top:1165px" width="20" height="20"><use href="#iTask" width="20" height="20"/></svg>
<svg style="left:499px;top:1161px" width="28" height="28"><use href="#iExp" width="28" height="28"/></svg>
<svg style="left:561px;top:1161px" width="28" height="28"><use href="#iSpot" width="28" height="28"/></svg>
<svg style="left:624px;top:1161px" width="28" height="28"><use href="#iOut" width="28" height="28"/></svg>
<svg style="left:686px;top:1161px" width="28" height="28"><use href="#iTeams" width="28" height="28"/></svg>
<svg style="left:748px;top:1161px" width="28" height="28"><use href="#iSlack" width="28" height="28"/></svg>
<div class="a" style="left:794px;top:1150px;width:56px;height:50px;background:#5f5e5d"></div>
<svg style="left:810px;top:1161px" width="28" height="28"><use href="#iChrome" width="28" height="28"/></svg>
<div class="a" style="left:849px;top:1150px;width:1px;height:50px;background:#2e2d2a"></div>
<svg style="left:872px;top:1161px" width="28" height="28"><use href="#iWord" width="28" height="28"/></svg>
<svg style="left:933px;top:1161px" width="28" height="28"><use href="#iExcel" width="28" height="28"/></svg>
<div class="a" style="left:489px;top:1197px;width:50px;height:3px;background:#5fd3c4"></div>
<div class="a" style="left:551px;top:1197px;width:50px;height:3px;background:#5fd3c4"></div>
<div class="a" style="left:613px;top:1197px;width:50px;height:3px;background:#5fd3c4"></div>
<div class="a" style="left:675px;top:1197px;width:50px;height:3px;background:#5fd3c4"></div>
<div class="a" style="left:794px;top:1197px;width:56px;height:3px;background:#5fd3c4"></div>
<div class="a" style="left:861px;top:1197px;width:50px;height:3px;background:#5fd3c4"></div>
<div class="a" style="left:923px;top:1197px;width:50px;height:3px;background:#5fd3c4"></div>
<!-- tray -->
<svg style="left:1440px;top:1160px" width="32" height="32" viewBox="0 0 32 32"><path d="M2 16A12 12 0 0 1 26 16z" fill="#4aa3f0"/><path d="M14 16v10a3 3 0 0 1-6 0" fill="none" stroke="#ccc" stroke-width="1.6"/><path d="M24 4l-1 3M28 6l-1 3M20 2l-1 3" stroke="#4aa3f0" stroke-width="1.5"/></svg>
<div class="t" style="left:1480px;top:1167px;font-size:18.25px;color:#f2f2f2">Afternoon rain</div>
<svg style="left:1627px;top:1169px" width="16" height="9" viewBox="0 0 16 9" fill="none" stroke="#f2f2f2" stroke-width="1.4"><path d="M1 8l7-7 7 7"/></svg>
<svg style="left:1654px;top:1168px" width="22" height="14" viewBox="0 0 22 14"><path d="M5 13a4.5 4.5 0 0 1 0-9 6 6 0 0 1 11 1 4 4 0 0 1 1 8z" fill="#1e8fe8"/></svg>
<svg style="left:1684px;top:1166px" width="20" height="18" viewBox="0 0 20 18" fill="none" stroke="#f2f2f2" stroke-width="1.2"><path d="M1 6h4l5-4v14l-5-4H1zM13 6c1.5 2 1.5 4 0 6M16 4c2.5 3 2.5 7 0 10"/></svg>
<svg style="left:1715px;top:1168px" width="20" height="14" viewBox="0 0 20 14" fill="none" stroke="#f2f2f2" stroke-width="1.2"><path d="M1 3h16v10H1zM17 6h2v4h-2"/><path d="M3 5h10v6H3z" fill="#f2f2f2"/><path d="M5 0v3M9 0v3" /></svg>
<svg style="left:1745px;top:1166px" width="20" height="18" viewBox="0 0 20 18" fill="none" stroke="#f2f2f2" stroke-width="1.3"><path d="M2 16A16 16 0 0 1 18 2M6 16A11 11 0 0 1 18 6M10 16A7 7 0 0 1 18 10"/><circle cx="16" cy="15" r="1.5" fill="#f2f2f2"/></svg>
<div class="t" style="left:1782px;top:1156px;font-size:14.4px;color:#f2f2f2">11:23 AM</div>
<div class="t" style="left:1780px;top:1179px;font-size:14.4px;color:#f2f2f2">4/26/2024</div>
<svg style="left:1868px;top:1162px" width="32" height="30" viewBox="0 0 32 30"><path d="M2 2h18v12h-8l-4 4v-4H2z" fill="#f2f2f2"/><path d="M5 6h12M5 9h12" stroke="#464541" stroke-width="1"/><circle cx="22" cy="19" r="9" fill="#464541" stroke="#aaa" stroke-width=".8"/><text x="22" y="24" font-size="12" fill="#fff" text-anchor="middle" font-family="Liberation Sans">12</text></svg>
<div class="a" style="left:1912px;top:1150px;width:1px;height:50px;background:#666"></div>
<!-- ================= RIGHT MONITOR: CHROME ================= -->
<div class="a" style="left:1920px;top:0;width:1920px;height:166px;background:#000"></div>
<div class="a" style="left:1926px;top:133px;width:28px;height:27px;border-radius:8px;background:#2b2b2b"></div>
<svg style="left:1935px;top:143px" width="10" height="7" viewBox="0 0 10 7" fill="none" stroke="#e6e6e6" stroke-width="1.6"><path d="M1 1l4 4 4-4"/></svg>
<svg style="left:1967px;top:141px" width="17" height="12" viewBox="0 0 17 12"><defs><linearGradient id="xg1967" x1="0" y1="0" x2="1" y2="1"><stop offset="0" stop-color="#21d4c8"/><stop offset=".5" stop-color="#1e90ff"/><stop offset="1" stop-color="#7a3cf0"/></linearGradient></defs><path d="M.5 1h2l2.3 3.6L7.1 1h2L5.8 6l3.5 5h-2L4.8 7.3 2.3 11h-2l3.5-5zM9.8 11V1h1.8l2.2 5 2.2-5h1.8v10h-1.5V4l-1.9 4.6h-1.2L11.3 4v7z" fill="url(#xg1967)"/></svg>
<div class="a" style="left:1992px;top:139px;width:170px;height:18px;overflow:hidden"><div class="t" style="left:0;top:3px;font-size:11.5px;color:#e6e6e6">Edit Survey | Qualtrics Experience</div></div>
<div class="a" style="left:2140px;top:139px;width:22px;height:18px;background:linear-gradient(90deg,rgba(0,0,0,0),#000)"></div>
<svg style="left:2172px;top:143px" width="9" height="9" viewBox="0 0 9 9" fill="none" stroke="#e6e6e6" stroke-width="1.5"><path d="M.5.5l8 8M8.5.5l-8 8"/></svg>
<svg style="left:2187px;top:132px" width="252" height="35" viewBox="0 0 252 35"><path d="M0 35a10 10 0 0 0 10-10V10A10 10 0 0 1 20 0h212a10 10 0 0 1 10 10v15a10 10 0 0 0 10 10z" fill="#2d2d2d"/></svg>
<svg style="left:2205px;top:141px" width="17" height="12" viewBox="0 0 17 12"><defs><linearGradient id="xg2205" x1="0" y1="0" x2="1" y2="1"><stop offset="0" stop-color="#21d4c8"/><stop offset=".5" stop-color="#1e90ff"/><stop offset="1" stop-color="#7a3cf0"/></linearGradient></defs><path d="M.5 1h2l2.3 3.6L7.1 1h2L5.8 6l3.5 5h-2L4.8 7.3 2.3 11h-2l3.5-5zM9.8 11V1h1.8l2.2 5 2.2-5h1.8v10h-1.5V4l-1.9 4.6h-1.2L11.3 4v7z" fill="url(#xg2205)"/></svg>
<div class="a" style="left:2230px;top:139px;width:165px;height:18px;overflow:hidden"><div class="t" style="left:0;top:3px;font-size:11.5px;color:#f0f0f0">Preview - Qualtrics Survey | Qualtrics</div></div>
<div class="a" style="left:2380px;top:139px;width:16px;height:18px;background:linear-gradient(90deg,rgba(45,45,45,0),#2d2d2d)"></div>
<svg style="left:2409px;top:143px" width="9" height="9" viewBox="0 0 9 9" fill="none" stroke="#e6e6e6" stroke-width="1.5"><path d="M.5.5l8 8M8.5.5l-8 8"/></svg>
<svg style="left:2445px;top:141px" width="11" height="11" viewBox="0 0 11 11" fill="none" stroke="#e6e6e6" stroke-width="1.7"><path d="M5.5 0v11M0 5.5h11"/></svg>
<div class="a" style="left:3720px;top:145px;width:15px;height:1.5px;background:#e6e6e6"></div>
<svg style="left:3766px;top:141px" width="11" height="11" viewBox="0 0 11 11" fill="none" stroke="#e6e6e6" stroke-width="1.2"><rect x=".6" y="2.6" width="7.8" height="7.8"/><path d="M2.6 2.6V.6h7.8v7.8H8.4"/></svg>
<svg style="left:3811px;top:140px" width="13" height="13" viewBox="0 0 13 13" fill="none" stroke="#e6e6e6" stroke-width="1.3"><path d="M.5.5l12 12M12.5.5l-12 12"/></svg>
<!-- toolbar -->
<div class="a" style="left:1920px;top:166px;width:1920px;height:47px;background:#2d2d2d;border-radius:8px 8px 0 0"></div>
<svg style="left:1934px;top:182px" width="16" height="14" viewBox="0 0 16 14" fill="none" stroke="#8a8a8a" stroke-width="1.6"><path d="M15 7H2M7 1L1 7l6 6"/></svg>
<svg style="left:1970px;top:182px" width="16" height="14" viewBox="0 0 16 14" fill="none" stroke="#8a8a8a" stroke-width="1.6"><path d="M1 7h13M9 1l6 6-6 6"/></svg>
<svg style="left:2006px;top:180px" width="17" height="17" viewBox="0 0 17 17" fill="none" stroke="#e6e6e6" stroke-width="1.7"><path d="M15 8.5A6.5 6.5 0 1 1 12.5 3.4"/><path d="M10 1h5v5" fill="#e6e6e6"/></svg>
<div class="a" style="left:2041px;top:173px;width:1588px;height:33px;border-radius:17px;background:#3c3c3c"></div>
<div class="a" style="left:2045px;top:177px;width:25px;height:25px;border-radius:13px;background:#2d2d2d"></div>
<svg style="left:2050px;top:183px" width="15" height="13" viewBox="0 0 15 13" fill="none" stroke="#e6e6e6" stroke-width="1.6"><path d="M7 2.5h7M1 10h7"/><circle cx="3" cy="2.5" r="2"/><circle cx="11.5" cy="10" r="2"/></svg>
<div class="t" style="left:2077px;top:182px;font-size:13.6px;color:#e8e8e8">pacificresearch.qualtrics.com<span style="color:#9aa0a6">/jfe/preview/previewId/8e7915d0-3184-491f-be92-bc2a2c54b6b1/SV_57SePKbS35aO6Wi?Q_CHL=preview&amp;Q_SurveyVersionID=current</span></div>
<svg style="left:3597px;top:181px" width="17" height="17" viewBox="0 0 17 17" fill="none" stroke="#e6e6e6" stroke-width="1.4"><path d="M8.5 1l2.2 4.8 5.2.5-3.9 3.5 1.1 5.2-4.6-2.7-4.6 2.7 1.1-5.2L1.1 6.3l5.2-.5z"/></svg>
<svg style="left:3645px;top:180px" width="19" height="19" viewBox="0 0 19 19"><circle cx="9.5" cy="9.5" r="9" fill="#15c39a"/><circle cx="9.5" cy="9.5" r="7.5" fill="#0b6e58"/><path d="M13 6.5a4.5 4.5 0 1 0 .5 4H10" fill="none" stroke="#fff" stroke-width="1.8"/></svg>
<svg style="left:3682px;top:180px" width="20" height="19" viewBox="0 0 20 19" fill="none" stroke="#e6e6e6" stroke-width="1.6"><path d="M1 5h5V3a2 2 0 0 1 4 0v2h5v5h2a2 2 0 0 1 0 4h-2v4H1z"/></svg>
<div class="a" style="left:3718px;top:180px;width:2px;height:19px;background:#e6e6e6"></div>
<svg style="left:3736px;top:179px" width="18" height="19" viewBox="0 0 18 19" fill="none" stroke="#e6e6e6" stroke-width="1.8"><path d="M9 1v12M4 8l5 5 5-5M1 12v6h16v-6"/></svg>
<svg style="left:3771px;top:179px" width="20" height="20" viewBox="0 0 20 20"><circle cx="10" cy="10" r="10" fill="#d8c2ad"/><path d="M4 10c0-5 2-8 6-8s6 3 6 8l1 9H3z" fill="#3a2418"/><circle cx="10" cy="10" r="4.5" fill="#e2b99a"/><path d="M3 20c1-4 4-5 7-5s6 1 7 5z" fill="#f3efe8"/></svg>
<svg style="left:3816px;top:181px" width="4" height="16" viewBox="0 0 4 16" fill="#e6e6e6"><circle cx="2" cy="2" r="1.8"/><circle cx="2" cy="8" r="1.8"/><circle cx="2" cy="14" r="1.8"/></svg>
<!-- qualtrics header -->
<div class="a" style="left:1920px;top:213px;width:1920px;height:952px;background:#fff"></div>
<div class="a" style="left:1944px;top:237px;width:132px;height:36px;border-radius:3px;background:#0b6bd3"></div>
<div class="t" style="left:1965px;top:249px;font-size:12.8px;color:#fff;font-weight:700">Restart Survey</div>
<div class="a" style="left:2092px;top:237px;width:143px;height:36px;border-radius:3px;border:1.5px solid #0b6bd3;background:#fff"></div>
<div class="t" style="left:2113px;top:248px;font-size:13.7px;color:#0b6bd3">Place Bookmark</div>
<div class="a" style="left:2259px;top:237px;width:1px;height:36px;background:#d0d0d0"></div>
<div class="t" style="left:2298px;top:248px;font-size:13.3px;color:#333">Tools</div>
<svg style="left:2389px;top:251px" width="10" height="6" viewBox="0 0 10 6" fill="none" stroke="#333" stroke-width="1.3"><path d="M1 1l4 4 4-4"/></svg>
<div class="a" style="left:2428px;top:237px;width:58px;height:36px;background:#e8e9ea"></div>
<svg style="left:2450px;top:245px" width="14" height="21" viewBox="0 0 14 21" fill="none" stroke="#111" stroke-width="1.6"><rect x="1" y="1" width="12" height="19" rx="2"/><path d="M1 15h12M6 17.5h2"/></svg>
<div class="a" style="left:3654px;top:237px;width:162px;height:36px;border-radius:3px;background:#0b6bd3"></div>
<svg style="left:3676px;top:245px" width="20" height="20" viewBox="0 0 20 20" fill="none" stroke="#fff" stroke-width="1.8"><circle cx="4" cy="10" r="3"/><circle cx="15" cy="4" r="3"/><circle cx="15" cy="16" r="3"/><path d="M6.7 8.6l5.6-3.2M6.7 11.4l5.6 3.2"/></svg>
<div class="t" style="left:3706px;top:248px;font-size:13px;color:#fff;font-weight:700">Share Preview</div>
<div class="a" style="left:1920px;top:296px;width:1920px;height:2px;background:#ececec"></div>
<!-- qualtrics content -->
<div class="a" style="left:1944px;top:321px;width:1468px;height:844px;background:#d8d8d8"></div>
<div class="a" style="left:2650px;top:321px;width:56px;height:55px;overflow:hidden"><svg style="left:0;top:-20.2px" width="56" height="72" viewBox="0 0 56 72"><use href="#logo" width="56" height="72"/></svg></div>
<div class="a" style="left:2293px;top:391px;width:770px;height:774px;background:#fff;border-radius:4px 4px 0 0"></div>
<div id="qtext" class="a" style="left:2308px;top:406px;font-size:26.2px;line-height:36px;color:#8a8a8a;white-space:nowrap">EIC is divided into many different areas. Looking at this map,<br>please select <b style="color:#6a6a6a;text-decoration:underline">up to three</b> areas or parts of the EIC you think<br>you will remember the most or are still thinking about after<br>leaving today. What areas of the exhibition made the biggest<br>impression on you? <i>Tap or click on the region(s) that most</i><br><i>impacted you.</i></div>
<svg style="left:2316px;top:654px" width="727" height="359"><use href="#mapQ" width="727" height="359"/></svg>
<div class="a" style="left:2308px;top:1096px;font-size:26.35px;line-height:36px;color:#8e8e8e;white-space:nowrap">Please share more about your selection. What about this<br>space resonated with you? What did you like or learn about in</div>
<!-- scrollbar -->
<div class="a" style="left:3412px;top:321px;width:17px;height:844px;background:#f1f1f1"></div>
<svg style="left:3416px;top:327px" width="9" height="6" viewBox="0 0 9 6"><path d="M0 5.5L4.5 .5 9 5.5z" fill="#505050"/></svg>
<div class="a" style="left:3414px;top:398px;width:13px;height:509px;background:#c1c1c1"></div>
<svg style="left:3416px;top:1153px" width="9" height="6" viewBox="0 0 9 6"><path d="M0 .5h9L4.5 5.5z" fill="#505050"/></svg>
<!-- phone -->
<div class="a" style="left:3453px;top:407px;width:4px;height:28px;border-radius:2px 0 0 2px;background:#222a33"></div>
<div class="a" style="left:3453px;top:464px;width:4px;height:46px;border-radius:2px 0 0 2px;background:#222a33"></div>
<div class="a" style="left:3453px;top:524px;width:4px;height:47px;border-radius:2px 0 0 2px;background:#222a33"></div>
<div class="a" style="left:3810px;top:464px;width:5px;height:79px;border-radius:0 2px 2px 0;background:#222a33"></div>
<div class="a" style="left:3456px;top:321px;width:355px;height:780px;border-radius:24px;background:#222a33;box-shadow:inset 0 0 0 1.5px #3a434c"></div>
<div class="a" style="left:3603px;top:337px;width:40px;height:6px;border-radius:3px;background:#151b21"></div>
<div class="a" style="left:3654px;top:335px;width:10px;height:10px;border-radius:5px;border:1.5px solid #151b21"></div>
<div class="a" style="left:3464px;top:352px;width:339px;height:736px;border-radius:18px 18px 16px 16px;background:#fff;overflow:hidden">
  <div class="t" style="left:15px;top:11px;font-size:14.5px;color:#111;font-weight:700">12:29</div>
  <svg style="left:280px;top:11px" width="14" height="11" viewBox="0 0 14 11"><rect x="0" y="7" width="3" height="4" fill="#111"/><rect x="4" y="5" width="3" height="6" fill="#111"/><rect x="8" y="2" width="3" height="9" fill="#111"/><rect x="12" y="0" width="2" height="11" fill="#bbb"/></svg>
  <div class="a" style="left:303px;top:12px;width:18px;height:8px;border-radius:2px;background:#111"></div>
  <div class="a" style="left:0;top:36px;width:339px;height:42px;background:#d8d8d8"></div>
  <div class="a" style="left:151px;top:36px;width:38px;height:42px;overflow:hidden"><svg style="left:0;top:-19.2px" width="37" height="47.5" viewBox="0 0 56 72"><use href="#logo" width="56" height="72"/></svg></div>
  <div class="a" style="left:20px;top:97px;font-size:20.9px;line-height:28.9px;color:#8a8a8a;white-space:nowrap">EIC is divided into many<br>different areas. Looking at this<br>map, please select <b style="color:#6a6a6a;text-decoration:underline">up to three</b><br>areas or parts of the EIC you<br>think you will remember the<br>most or are still thinking about<br>after leaving today. What areas<br>of the exhibition made the<br>biggest impression on you?<br><i>Tap or click on the region(s)</i><br><i>that most impacted you.</i></div>
  <svg style="left:23px;top:438px" width="294" height="145"><use href="#mapQ" width="294" height="145"/></svg>
  <div class="a" style="left:20px;top:669px;font-size:20.9px;line-height:28.5px;color:#8e8e8e;white-space:nowrap">Please share more about your<br>selection. What about this<br>space resonated with you?</div>
</div>
<!-- right taskbar -->
<div class="a" style="left:1920px;top:1165px;width:1920px;height:41px;background:#464541"></div>
<svg style="left:1936px;top:1178px" width="16" height="16"><use href="#iWin" width="16" height="16"/></svg>
<svg style="left:1981px;top:1174px" width="22" height="22" viewBox="0 0 22 22" fill="none" stroke="#fff" stroke-width="2"><circle cx="13" cy="9" r="7"/><path d="M8 14l-7 7"/></svg>
<svg style="left:2032px;top:1178px" width="16" height="16"><use href="#iTask" width="16" height="16"/></svg>
<div class="a" style="left:2312px;top:1165px;width:44px;height:41px;background:#5f5e5d"></div>
<svg style="left:2080px;top:1174px" width="22" height="22"><use href="#iExp" width="22" height="22"/></svg>
<svg style="left:2129px;top:1174px" width="22" height="22"><use href="#iSpot" width="22" height="22"/></svg>
<svg style="left:2178px;top:1174px" width="22" height="22"><use href="#iOut" width="22" height="22"/></svg>
<svg style="left:2227px;top:1174px" width="22" height="22"><use href="#iTeams" width="22" height="22"/></svg>
<svg style="left:2276px;top:1174px" width="22" height="22"><use href="#iSlack" width="22" height="22"/></svg>
<svg style="left:2324px;top:1174px" width="22" height="22"><use href="#iChrome" width="22" height="22"/></svg>
<svg style="left:2373px;top:1174px" width="22" height="22"><use href="#iWord" width="22" height="22"/></svg>
<svg style="left:2422px;top:1174px" width="22" height="22"><use href="#iExcel" width="22" height="22"/></svg>
<div class="a" style="left:2071px;top:1204px;width:40px;height:2px;background:#5fd3c4"></div>
<div class="a" style="left:2120px;top:1204px;width:40px;height:2px;background:#5fd3c4"></div>
<div class="a" style="left:2169px;top:1204px;width:40px;height:2px;background:#5fd3c4"></div>
<div class="a" style="left:2218px;top:1204px;width:40px;height:2px;background:#5fd3c4"></div>
<div class="a" style="left:2312px;top:1204px;width:44px;height:2px;background:#5fd3c4"></div>
<div class="a" style="left:2364px;top:1204px;width:40px;height:2px;background:#5fd3c4"></div>
<div class="a" style="left:2413px;top:1204px;width:40px;height:2px;background:#5fd3c4"></div>
<div class="a" style="left:3700px;top:1170px;width:134px;text-align:right;font-size:12.3px;line-height:1;color:#f2f2f2;white-space:nowrap">11:23 AM</div>
<div class="a" style="left:3700px;top:1188px;width:135px;text-align:right;font-size:12.3px;line-height:1;color:#f2f2f2;white-space:nowrap">4/26/2024</div>
</body></html>
